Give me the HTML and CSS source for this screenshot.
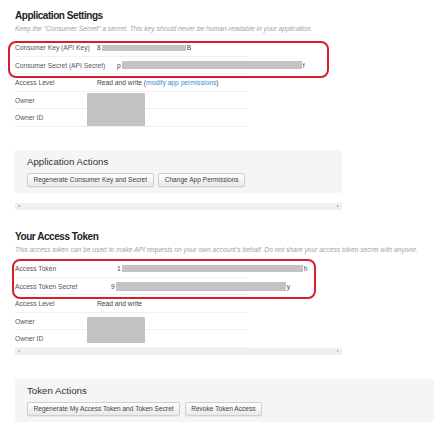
FILE: index.html
```html
<!DOCTYPE html>
<html>
<head>
<meta charset="utf-8">
<link rel="stylesheet" href="styles.css">
</head>
<body>
<div class="page">
  <section class="settings">
    <h2 class="title">Application Settings</h2>
    <p class="note">Keep the "Consumer Secret" a secret. This key should never be human-readable in your application.</p>
    <div class="rows">
      <div class="marked">
        <div class="row"><span class="label">Consumer Key (API Key)</span><span class="value">8<span class="redact r1"></span>B</span></div>
        <div class="row"><span class="label">Consumer Secret (API Secret)</span><span class="value v2">p<span class="redact r2"></span>f</span></div>
        <div class="ring ring1"></div>
      </div>
      <div class="row"><span class="label">Access Level</span><span class="value">Read and write (<a class="link">modify app permissions</a>)</span></div>
      <div class="row owner"><span class="label">Owner</span><span class="value"></span><div class="ownerbox ob1"></div></div>
      <div class="row"><span class="label">Owner ID</span><span class="value"></span></div>
    </div>
    <div class="panel panel1">
      <h3 class="panel-title">Application Actions</h3>
      <div class="buttons">
        <button class="btn">Regenerate Consumer Key and Secret</button>
        <button class="btn">Change App Permissions</button>
      </div>
    </div>
    <div class="scrollbar"><span class="arr left"></span><span class="arr right"></span></div>
  </section>

  <section class="token">
    <h2 class="title">Your Access Token</h2>
    <p class="note">This access token can be used to make API requests on your own account's behalf. Do not share your access token secret with anyone.</p>
    <div class="rows">
      <div class="marked">
        <div class="row"><span class="label">Access Token</span><span class="value v3">1<span class="redact r3"></span>h</span></div>
        <div class="row"><span class="label">Access Token Secret</span><span class="value v4">9<span class="redact r4"></span>y</span></div>
        <div class="ring ring2"></div>
      </div>
      <div class="row"><span class="label">Access Level</span><span class="value">Read and write</span></div>
      <div class="row owner"><span class="label">Owner</span><span class="value"></span><div class="ownerbox ob2"></div></div>
      <div class="row"><span class="label">Owner ID</span><span class="value"></span></div>
    </div>
    <div class="scrollbar sb2"><span class="arr left"></span><span class="arr right"></span></div>
    <div class="panel panel2">
      <h3 class="panel-title">Token Actions</h3>
      <div class="buttons">
        <button class="btn">Regenerate My Access Token and Token Secret</button>
        <button class="btn">Revoke Token Access</button>
      </div>
    </div>
  </section>
</div>
</body>
</html>
```

FILE: styles.css
```css
html, body {
  margin: 0;
  padding: 0;
  background: #fff;
}
body {
  font-family: "Liberation Sans", Arial, sans-serif;
  font-size: 6.7px;
  color: #333;
}
.page {
  padding-left: 15px;
}
.title {
  margin: 0;
  font-size: 10px;
  line-height: 12px;
  font-weight: bold;
  letter-spacing: -0.45px;
  color: #222;
}
.settings .title {
  padding-top: 10px;
}
.token .title {
  margin-top: 21px;
}
.note {
  margin: 2px 0 5.25px;
  font-style: italic;
  font-size: 6.7px;
  line-height: 10px;
  color: #a3a3a3;
  white-space: nowrap;
}
.rows {
  width: 233px;
}
.marked {
  position: relative;
}
.row {
  position: relative;
  display: flex;
  align-items: center;
  height: 17.5px;
  box-sizing: border-box;
  border-bottom: 1px solid #f1f1f1;
}
.label {
  width: 82px;
  flex: none;
  color: #555;
  white-space: nowrap;
}
.value {
  display: flex;
  align-items: center;
  color: #444;
  white-space: nowrap;
}
.v2 { margin-left: 20px; }
.v3 { margin-left: 20px; }
.v4 { margin-left: 14px; }
.link {
  color: #3b8dcc;
  text-decoration: none;
}
.redact {
  display: inline-block;
  background: #c3c3c3;
  margin: 0 1px;
}
.r1 { width: 84px; height: 6px; }
.r2 { width: 180px; height: 8px; }
.r3 { width: 181px; height: 7px; }
.r4 { width: 170px; height: 9px; }
.ring {
  position: absolute;
  box-sizing: border-box;
  border: 2px solid #d71f2b;
  border-radius: 8px;
  pointer-events: none;
}
.ring1 {
  left: -7.5px;
  top: 1.5px;
  width: 321px;
  height: 37px;
}
.ring2 {
  left: -3.5px;
  top: -1px;
  width: 304px;
  height: 40px;
}
.ownerbox {
  position: absolute;
  left: 72px;
  width: 58px;
  background: #c3c3c3;
}
.ob1 { top: 1.25px; height: 34px; }
.ob2 { top: 4.25px; height: 26px; }
.panel {
  background: #f5f5f5;
  border-radius: 3px;
  box-sizing: border-box;
  padding: 6px 12px 6.5px 12px;
}
.panel1 {
  margin-top: 23.25px;
  margin-left: -1px;
  width: 328px;
  padding-left: 13px;
}
.panel2 {
  margin-top: 24px;
  width: 419px;
}
.panel-title {
  margin: 0;
  font-size: 9.7px;
  line-height: 12px;
  font-weight: normal;
  color: #333;
}
.buttons {
  display: flex;
  gap: 4.5px;
  margin-top: 4.5px;
}
.btn {
  height: 14px;
  padding: 0 5.5px;
  font-family: "Liberation Sans", Arial, sans-serif;
  font-size: 6.6px;
  color: #444;
  border: 1px solid #cfcfcf;
  border-radius: 2px;
  background: linear-gradient(#ffffff, #e9e9e9);
  box-shadow: 0 1px 1px rgba(0,0,0,0.06);
}
.scrollbar {
  position: relative;
  margin-top: 10px;
  width: 327px;
  height: 7px;
  background: #f0f0f0;
}
.sb2 {
  margin-top: 0.5px;
}
.arr {
  position: absolute;
  top: 2px;
  width: 0;
  height: 0;
  border-top: 1.5px solid transparent;
  border-bottom: 1.5px solid transparent;
}
.arr.left {
  left: 3px;
  border-right: 2px solid #999;
}
.arr.right {
  right: 3px;
  border-left: 2px solid #999;
}
```
